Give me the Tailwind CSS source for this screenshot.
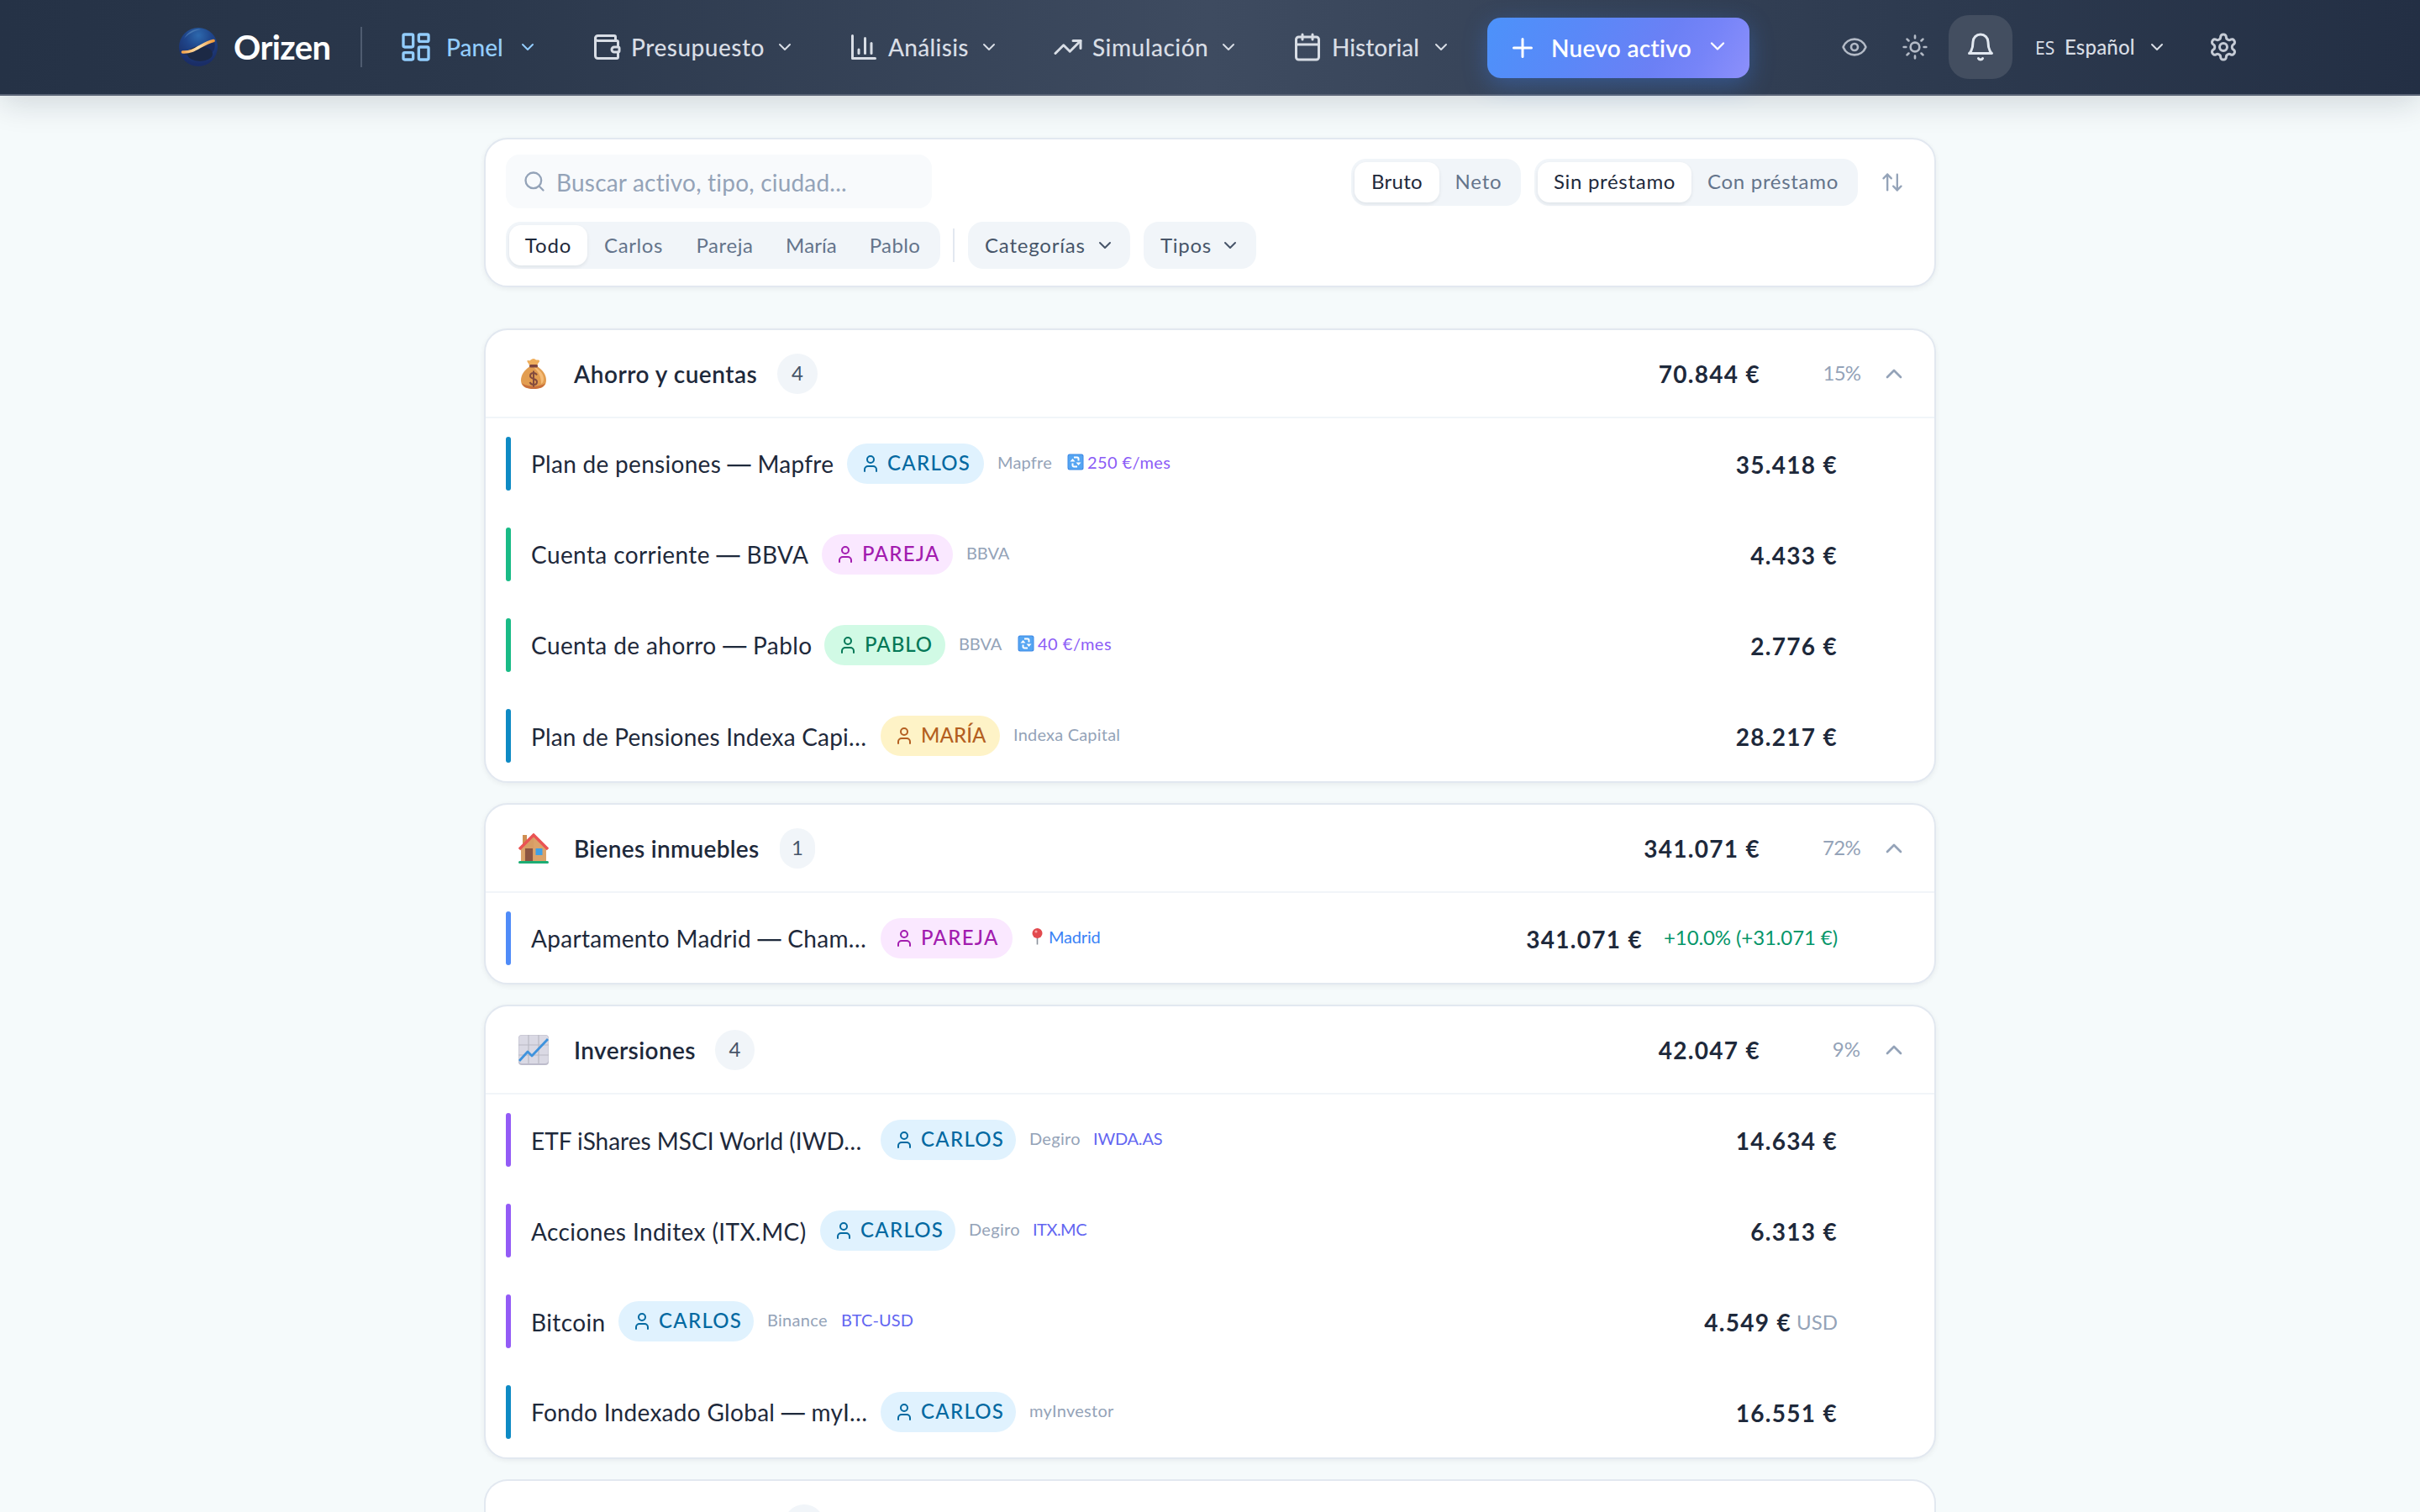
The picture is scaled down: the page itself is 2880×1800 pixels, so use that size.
<!DOCTYPE html>
<html lang="es">
<head>
    <meta charset="UTF-8">
    <meta name="viewport" content="width=device-width, initial-scale=1.0">
    <title>Orizen</title>
    <script src="https://cdn.jsdelivr.net/npm/@tailwindcss/browser@4"></script>
</head>
<body class="bg-[#f5fafb] font-[Lato,'Open_Sans',sans-serif] text-[#1e293b] h-[1800px] overflow-hidden">

    <!-- Icon sprite -->
    <svg class="hidden" xmlns="http://www.w3.org/2000/svg">
        <symbol id="down" viewBox="0 0 24 24"><path d="m6 9 6 6 6-6"/></symbol>
        <symbol id="up" viewBox="0 0 24 24"><path d="m18 15-6-6-6 6"/></symbol>
        <symbol id="user" viewBox="0 0 24 24"><path d="M19 21v-2a4 4 0 0 0-4-4H9a4 4 0 0 0-4 4v2"/><circle cx="12" cy="7" r="4"/></symbol>
        <symbol id="repeat" viewBox="0 0 20 20">
            <rect x="0.5" y="0.5" width="19" height="19" rx="2.5" fill="#3f8ae6" stroke="none"/>
            <rect x="1.5" y="1.5" width="17" height="17" rx="2" fill="#55a5f2" stroke="none"/>
            <path d="M6.500 11.500v2.500a1.500 1.500 0 0 0 1.500 1.500h4M13.500 8.500V6A1.500 1.500 0 0 0 12 4.500H8" fill="none" stroke="#fff" stroke-width="2"/>
            <path d="M3.500 9.500 6.500 6l3 3.500zM10.500 10.500l3 3.500 3-3.500z" fill="#fff" stroke="none"/>
        </symbol>
    </svg>

    <!-- Navbar -->
    <nav class="relative z-10 flex items-center h-[114px] pl-[212px] border-b-2 border-[#5a6476] bg-[linear-gradient(90deg,#253246_0%,#2b384c_20%,#3e4b60_50%,#2d3a4f_80%,#232f44_100%)] shadow-[0_8px_36px_rgba(15,23,42,0.16)] text-[28px] font-medium text-[#d8dde5]">
        <svg class="size-12 shrink-0" viewBox="0 0 48 48">
            <defs>
                <radialGradient id="globe" cx="0.5" cy="0.2" r="0.75">
                    <stop offset="0" stop-color="#2d69ae"/>
                    <stop offset="0.45" stop-color="#1f458a"/>
                    <stop offset="1" stop-color="#1a2d66"/>
                </radialGradient>
                <linearGradient id="swoosh" x1="0" x2="1">
                    <stop offset="0" stop-color="#f5a44a"/>
                    <stop offset="0.5" stop-color="#ffe2b0"/>
                    <stop offset="1" stop-color="#f09a3c"/>
                </linearGradient>
            </defs>
            <circle cx="24" cy="24" r="23" fill="url(#globe)"/>
            <path d="M7 14C12 5 20 2 27 3 18 5 11 9 7 14z" fill="#5b8cc0" opacity="0.6"/>
            <path d="M4 29C18 31 27 19 43 17c1 4 1 8-1 12-8 6-27 8-36 3z" fill="#1c2c5c"/>
            <ellipse cx="26" cy="32" rx="15" ry="9" fill="#1c2945"/>
            <path d="M5.500 30C20 31 27 20 42 16.500" fill="none" stroke="url(#swoosh)" stroke-width="3.600" stroke-linecap="round"/>
        </svg>
        <span class="ml-[18px] w-[116px] text-[40px] leading-none font-bold text-white tracking-[-0.6px]">Orizen</span>
        <div class="ml-[35px] w-[2px] h-12 bg-[#4f5c70]"></div>

        <div class="ml-11 flex items-center gap-16 whitespace-nowrap">
            <div class="flex items-center text-[#93cdfd]">
                <svg class="size-10" viewBox="0 0 24 24" fill="none" stroke="currentColor" stroke-width="2" stroke-linecap="round" stroke-linejoin="round"><rect width="7" height="9" x="3" y="3" rx="1"/><rect width="7" height="5" x="14" y="3" rx="1"/><rect width="7" height="9" x="14" y="12" rx="1"/><rect width="7" height="5" x="3" y="16" rx="1"/></svg>
                <span class="ml-[16px] w-[69px]">Panel</span>
                <svg class="ml-4 size-6" fill="none" stroke="currentColor" stroke-width="2" stroke-linecap="round" stroke-linejoin="round"><use href="#down"/></svg>
            </div>
            <div class="flex items-center">
                <svg class="size-9" viewBox="0 0 24 24" fill="none" stroke="currentColor" stroke-width="2" stroke-linecap="round" stroke-linejoin="round"><path d="M19 7V4a1 1 0 0 0-1-1H5a2 2 0 0 0 0 4h15a1 1 0 0 1 1 1v4h-3a2 2 0 0 0 0 4h3a1 1 0 0 0 1-1v-2a1 1 0 0 0-1-1"/><path d="M3 5v14a2 2 0 0 0 2 2h15a1 1 0 0 0 1-1v-4"/></svg>
                <span class="ml-[11px] w-[160px] tracking-[0.5px]">Presupuesto</span>
                <svg class="ml-[11px] size-6" fill="none" stroke="currentColor" stroke-width="2" stroke-linecap="round" stroke-linejoin="round"><use href="#down"/></svg>
            </div>
            <div class="flex items-center">
                <svg class="size-9" viewBox="0 0 24 24" fill="none" stroke="currentColor" stroke-width="2" stroke-linecap="round" stroke-linejoin="round"><path d="M3 3v18h18"/><path d="M18 17V9"/><path d="M13 17V5"/><path d="M8 17v-3"/></svg>
                <span class="ml-[11px] w-[97px] tracking-[0.3px]">Análisis</span>
                <svg class="ml-[11px] size-6" fill="none" stroke="currentColor" stroke-width="2" stroke-linecap="round" stroke-linejoin="round"><use href="#down"/></svg>
            </div>
            <div class="flex items-center">
                <svg class="size-9" viewBox="0 0 24 24" fill="none" stroke="currentColor" stroke-width="2" stroke-linecap="round" stroke-linejoin="round"><path d="m22 7-8.500 8.500-5-5L2 17"/><path d="M16 7h6v6"/></svg>
                <span class="ml-[11px] w-[140px] tracking-[0.5px]">Simulación</span>
                <svg class="ml-[10px] size-6" fill="none" stroke="currentColor" stroke-width="2" stroke-linecap="round" stroke-linejoin="round"><use href="#down"/></svg>
            </div>
            <div class="flex items-center">
                <svg class="size-9" viewBox="0 0 24 24" fill="none" stroke="currentColor" stroke-width="2" stroke-linecap="round" stroke-linejoin="round"><path d="M8 2v4"/><path d="M16 2v4"/><rect width="18" height="18" x="3" y="4" rx="2"/><path d="M3 10h18"/></svg>
                <span class="ml-[11px] w-[106px]">Historial</span>
                <svg class="ml-[12px] size-6" fill="none" stroke="currentColor" stroke-width="2" stroke-linecap="round" stroke-linejoin="round"><use href="#down"/></svg>
            </div>
        </div>

        <div class="ml-[43px] w-[312px] h-[72px] mt-px shrink-0 flex items-center pl-6 rounded-[16px] bg-[linear-gradient(120deg,#4c92fa_0%,#5a88f8_35%,#6b80f5_65%,#7684f8_80%,#8d90fb_100%)] shadow-[0_8px_28px_rgba(59,130,246,0.35)] font-semibold text-white whitespace-nowrap">
            <svg class="size-9" viewBox="0 0 24 24" fill="none" stroke="currentColor" stroke-width="2" stroke-linecap="round"><path d="M5 12h14M12 5v14"/></svg>
            <span class="ml-4 w-[170px] tracking-[0.3px]">Nuevo activo</span>
            <svg class="ml-[14px] mb-[3px] size-7" fill="none" stroke="currentColor" stroke-width="2" stroke-linecap="round" stroke-linejoin="round"><use href="#down"/></svg>
        </div>

        <svg class="ml-[109px] size-8 shrink-0 text-[#b3bac6]" viewBox="0 0 24 24" fill="none" stroke="currentColor" stroke-width="2" stroke-linecap="round" stroke-linejoin="round"><path d="M2.062 12.348a1 1 0 0 1 0-.696 10.750 10.750 0 0 1 19.876 0 1 1 0 0 1 0 .696 10.750 10.750 0 0 1-19.876 0"/><circle cx="12" cy="12" r="3"/></svg>
        <svg class="ml-10 size-8 shrink-0 text-[#b3bac6]" viewBox="0 0 24 24" fill="none" stroke="currentColor" stroke-width="2" stroke-linecap="round" stroke-linejoin="round"><circle cx="12" cy="12" r="4"/><path d="M12 2v2M12 20v2M4.930 4.930l1.410 1.410M17.660 17.660l1.410 1.410M2 12h2M20 12h2M6.340 17.660l-1.410 1.410M19.070 4.930l-1.410 1.410"/></svg>
        <div class="ml-6 size-[76px] shrink-0 rounded-[24px] bg-[#434e60] flex items-center justify-center text-[#e2e8f0]">
            <svg class="size-9" viewBox="0 0 24 24" fill="none" stroke="currentColor" stroke-width="2" stroke-linecap="round" stroke-linejoin="round"><path d="M6 8a6 6 0 0 1 12 0c0 7 3 9 3 9H3s3-2 3-9"/><path d="M10.300 21a1.940 1.940 0 0 0 3.400 0"/></svg>
        </div>
        <span class="ml-[27px] w-6 pt-[4px] text-[21px] font-normal font-['Noto_Sans',sans-serif]">ES</span>
        <span class="ml-[11px] w-[86px] text-[24px] pb-px tracking-[0.2px]">Español</span>
        <svg class="ml-[12px] size-6" fill="none" stroke="currentColor" stroke-width="2" stroke-linecap="round" stroke-linejoin="round"><use href="#down"/></svg>
        <svg class="ml-[49px] size-9 text-[#c5cbd5]" viewBox="0 0 24 24" fill="none" stroke="currentColor" stroke-width="2" stroke-linecap="round" stroke-linejoin="round"><path d="M12.220 2h-.44a2 2 0 0 0-2 2v.18a2 2 0 0 1-1 1.730l-.43.25a2 2 0 0 1-2 0l-.15-.08a2 2 0 0 0-2.730.73l-.22.38a2 2 0 0 0 .73 2.730l.15.1a2 2 0 0 1 1 1.720v.51a2 2 0 0 1-1 1.740l-.15.09a2 2 0 0 0-.73 2.730l.22.38a2 2 0 0 0 2.730.73l.15-.08a2 2 0 0 1 2 0l.43.25a2 2 0 0 1 1 1.730V20a2 2 0 0 0 2 2h.44a2 2 0 0 0 2-2v-.18a2 2 0 0 1 1-1.730l.43-.25a2 2 0 0 1 2 0l.15.08a2 2 0 0 0 2.730-.73l.22-.39a2 2 0 0 0-.73-2.730l-.15-.08a2 2 0 0 1-1-1.740v-.5a2 2 0 0 1 1-1.740l.15-.09a2 2 0 0 0 .73-2.730l-.22-.38a2 2 0 0 0-2.730-.73l-.15.08a2 2 0 0 1-2 0l-.43-.25a2 2 0 0 1-1-1.730V4a2 2 0 0 0-2-2z"/><circle cx="12" cy="12" r="3"/></svg>
    </nav>

    <main class="w-[1728px] mx-auto pt-[50px] whitespace-nowrap">
        <!-- Filters -->
        <section class="mb-[49px] px-6 pt-[18px] pb-5 bg-white border-2 border-[#e2e8f0] rounded-[28px] shadow-[0_2px_6px_rgba(15,23,42,0.06)] text-[24px] font-normal text-[#64748b]">
            <div class="flex items-center">
                <div class="w-[507px] h-16 flex items-center pl-5 rounded-[16px] bg-[#f8fafc] text-[28px] text-[#94a3b8]">
                    <svg class="size-7" viewBox="0 0 24 24" fill="none" stroke="currentColor" stroke-width="2" stroke-linecap="round"><circle cx="11" cy="11" r="8"/><path d="m21 21-4.300-4.300"/></svg>
                    <span class="ml-3 pt-px tracking-[0.2px]">Buscar activo, tipo, ciudad...</span>
                </div>
                <div class="ml-auto mt-px h-14 p-1 flex rounded-[18px] bg-[#f1f5f9]">
                    <div class="w-[101px] h-12 pb-[2px] flex items-center justify-center rounded-[14px] bg-white text-[#1e293b] tracking-[0.3px] shadow-[0_2px_4px_rgba(15,23,42,0.08)]">Bruto</div>
                    <div class="w-[93px] h-12 pb-[2px] flex items-center justify-center tracking-[0.8px]">Neto</div>
                </div>
                <div class="ml-4 mt-px h-14 p-1 flex rounded-[18px] bg-[#f1f5f9]">
                    <div class="w-[183px] h-12 pb-[2px] flex items-center justify-center rounded-[14px] bg-white text-[#1e293b] tracking-[0.7px] shadow-[0_2px_4px_rgba(15,23,42,0.08)]">Sin préstamo</div>
                    <div class="w-[194px] h-12 pb-[2px] flex items-center justify-center tracking-[0.7px]">Con préstamo</div>
                </div>
                <svg class="ml-[27px] mr-[12px] mt-[2px] size-7 text-[#94a3b8]" viewBox="0 0 24 24" fill="none" stroke="currentColor" stroke-width="2" stroke-linecap="round" stroke-linejoin="round"><path d="m21 16-4 4-4-4"/><path d="M17 20V4"/><path d="m3 8 4-4 4 4"/><path d="M7 4v16"/></svg>
            </div>
            <div class="mt-4 flex items-center h-14">
                <div class="h-14 p-1 flex rounded-[18px] bg-[#f1f5f9]">
                    <div class="w-[93px] h-12 flex items-center justify-center rounded-[14px] bg-white text-[#1e293b] tracking-[0.9px] shadow-[0_2px_4px_rgba(15,23,42,0.08)]">Todo</div>
                    <div class="w-[110px] h-12 flex items-center justify-center tracking-[0.6px]">Carlos</div>
                    <div class="w-[107px] h-12 flex items-center justify-center tracking-[0.6px]">Pareja</div>
                    <div class="w-[99px] h-12 flex items-center justify-center tracking-[0.1px]">María</div>
                    <div class="w-[100px] h-12 flex items-center justify-center tracking-[0.4px]">Pablo</div>
                </div>
                <div class="ml-[15px] w-[2px] h-10 bg-[#e2e8f0]"></div>
                <div class="ml-[16px] w-[193px] h-14 flex items-center pl-5 rounded-[18px] bg-[#f1f5f9] text-[#475569]">
                    <span class="w-[120px] tracking-[0.8px]">Categorías</span>
                    <svg class="ml-[11px] size-6" fill="none" stroke="currentColor" stroke-width="2" stroke-linecap="round" stroke-linejoin="round"><use href="#down"/></svg>
                </div>
                <div class="ml-4 w-[134px] h-14 flex items-center pl-5 rounded-[18px] bg-[#f1f5f9] text-[#475569]">
                    <span class="w-[60px] tracking-[0.7px]">Tipos</span>
                    <svg class="ml-[11px] size-6" fill="none" stroke="currentColor" stroke-width="2" stroke-linecap="round" stroke-linejoin="round"><use href="#down"/></svg>
                </div>
            </div>
        </section>

        <div class="flex flex-col gap-[24px] text-[28px]">

            <!-- Ahorro y cuentas -->
            <section class="h-[541px] bg-white border-2 border-[#e2e8f0] rounded-[28px] shadow-[0_2px_6px_rgba(15,23,42,0.06)]">
                <div class="h-[105px] flex items-center pl-[33px] pr-8 border-b-2 border-[#f1f5f9]">
                    <div class="w-12 flex justify-center">
                        <svg class="size-9" viewBox="0 0 36 36">
                            <path d="M13 8c-1-3-3-4-2.500-5.500S13 3 14 2s2-2 4-2 2 1.500 3.500 1.500S24.500 1 25 2.500 23 5 22.500 8z" fill="#efae5c"/>
                            <path d="M13 9.500h10C29 14 33 19 33 25.500S29 36 18 36 3 32 3 25.500 7 14 13 9.500z" fill="#e29d50"/>
                            <path d="M20 10c7 5 10 9 10 14 0 3-1 5-3 6 0-9-3-14-9-20z" fill="#f6bd78"/>
                            <path d="M4 29c6 5 22 5 28 0-2 5-7 7-14 7S6 34 4 29z" fill="#c86f3c"/>
                            <rect x="13" y="7" width="10" height="3.500" rx="1.500" fill="#7c4440"/>
                            <path d="M22 19.500c-1-2-2.500-2.500-4-2.500-2.500 0-4 1.500-4 3.500 0 4.500 8 2.500 8 7 0 2-1.500 3.500-4 3.500-2 0-3.500-1-4.500-3M18 14.500v19" fill="none" stroke="#834b3d" stroke-width="2"/>
                        </svg>
                    </div>
                    <span class="ml-6 w-[220px] font-semibold tracking-[0.5px]">Ahorro y cuentas</span>
                    <span class="ml-[22px] w-12 h-12 pb-[2px] flex items-center justify-center rounded-full bg-[#f1f5f9] text-[24px] text-[#475569]">4</span>
                    <span class="ml-auto font-bold tracking-[1.3px]">70.844 €</span>
                    <span class="w-[119px] pb-[2px] text-right text-[24px] text-[#94a3b8] tracking-[-0.9px]">15%</span>
                    <svg class="ml-6 size-8 text-[#94a3b8]" fill="none" stroke="currentColor" stroke-width="2" stroke-linecap="round" stroke-linejoin="round"><use href="#up"/></svg>
                </div>
                <div class="h-[108px] flex items-center pl-6 pr-[115px]">
                    <div class="w-[6px] h-16 rounded-full bg-[#0e8ac4]"></div>
                    <span class="ml-6 w-[360px] pt-px tracking-[0.3px]">Plan de pensiones <span class="font-[Inter]">—</span> Mapfre</span>
                    <span class="ml-4 w-[163px] h-12 pl-4 flex items-center rounded-full bg-[#e0f2fe] text-[24px] text-[#0369a1]">
                        <svg class="size-6 mr-2" fill="none" stroke="currentColor" stroke-width="2" stroke-linecap="round" stroke-linejoin="round"><use href="#user"/></svg><span class="pb-[3px] font-medium tracking-[1.3px]">CARLOS</span>
                    </span>
                    <span class="ml-4 w-[67px] pb-[5px] text-[20px] text-[#94a3b8] tracking-[0.2px]">Mapfre</span>
                    <svg class="ml-4 mb-1 size-5"><use href="#repeat"/></svg>
                    <span class="ml-1 pb-[5px] text-[20px] text-[#8b5cf6] tracking-[0.4px]">250 €/mes</span>
                    <span class="ml-auto pt-[2px] font-bold tracking-[1.3px]">35.418 €</span>
                </div>
                <div class="h-[108px] flex items-center pl-6 pr-[115px]">
                    <div class="w-[6px] h-16 rounded-full bg-[#19bb86]"></div>
                    <span class="ml-6 w-[330px] pt-px tracking-[0.4px]">Cuenta corriente <span class="font-[Inter]">—</span> BBVA</span>
                    <span class="ml-4 w-[156px] h-12 pl-4 flex items-center rounded-full bg-[#fae8ff] text-[24px] text-[#a21caf]">
                        <svg class="size-6 mr-2" fill="none" stroke="currentColor" stroke-width="2" stroke-linecap="round" stroke-linejoin="round"><use href="#user"/></svg><span class="pb-[3px] font-medium tracking-[1.3px]">PAREJA</span>
                    </span>
                    <span class="ml-4 pb-[5px] text-[20px] text-[#94a3b8] tracking-[-0.1px]">BBVA</span>
                    <span class="ml-auto pt-[2px] font-bold tracking-[1.3px]">4.433 €</span>
                </div>
                <div class="h-[108px] flex items-center pl-6 pr-[115px]">
                    <div class="w-[6px] h-16 rounded-full bg-[#19bb86]"></div>
                    <span class="ml-6 w-[333px] pt-px tracking-[0.4px]">Cuenta de ahorro <span class="font-[Inter]">—</span> Pablo</span>
                    <span class="ml-4 w-[144px] h-12 pl-4 flex items-center rounded-full bg-[#d1fae5] text-[24px] text-[#047857]">
                        <svg class="size-6 mr-2" fill="none" stroke="currentColor" stroke-width="2" stroke-linecap="round" stroke-linejoin="round"><use href="#user"/></svg><span class="pb-[3px] font-medium tracking-[1.0px]">PABLO</span>
                    </span>
                    <span class="ml-4 w-[54px] pb-[5px] text-[20px] text-[#94a3b8] tracking-[-0.1px]">BBVA</span>
                    <svg class="ml-4 mb-1 size-5"><use href="#repeat"/></svg>
                    <span class="ml-1 pb-[5px] text-[20px] text-[#8b5cf6] tracking-[0.5px]">40 €/mes</span>
                    <span class="ml-auto pt-[2px] font-bold tracking-[1.3px]">2.776 €</span>
                </div>
                <div class="h-[108px] flex items-center pl-6 pr-[115px]">
                    <div class="w-[6px] h-16 rounded-full bg-[#0e8ac4]"></div>
                    <span class="ml-6 w-[400px] pt-px tracking-[0.2px]">Plan de Pensiones Indexa Capi…</span>
                    <span class="ml-4 w-[142px] h-12 pl-4 flex items-center rounded-full bg-[#fef3c7] text-[24px] text-[#b45f21]">
                        <svg class="size-6 mr-2" fill="none" stroke="currentColor" stroke-width="2" stroke-linecap="round" stroke-linejoin="round"><use href="#user"/></svg><span class="pb-[3px] font-medium tracking-[0.1px]">MARÍA</span>
                    </span>
                    <span class="ml-4 pb-[5px] text-[20px] text-[#94a3b8] tracking-[0.2px]">Indexa Capital</span>
                    <span class="ml-auto pt-[2px] font-bold tracking-[1.3px]">28.217 €</span>
                </div>
            </section>

            <!-- Bienes inmuebles -->
            <section class="h-[216px] bg-white border-2 border-[#e2e8f0] rounded-[28px] shadow-[0_2px_6px_rgba(15,23,42,0.06)]">
                <div class="h-[105px] flex items-center pl-[33px] pr-8 border-b-2 border-[#f1f5f9]">
                    <div class="w-12 flex justify-center">
                        <svg class="size-9" viewBox="0 0 36 36">
                            <rect x="5" y="2" width="5" height="12" fill="#cf8f52"/>
                            <path d="M18 3 3 18v16h30V18z" fill="#dba36a"/>
                            <path d="M18 3v31H7V14z" fill="#d39a60" opacity="0.6"/>
                            <rect x="8" y="18" width="9" height="15" fill="#8d5542"/>
                            <rect x="20.500" y="18" width="8" height="8" fill="#3fa0e6"/>
                            <path d="M1 19 18 2l17 17" fill="none" stroke="#ea5353" stroke-width="3.400"/>
                            <rect x="0" y="33" width="36" height="3" rx="1.500" fill="#1cad74"/>
                        </svg>
                    </div>
                    <span class="ml-6 w-[223px] font-semibold tracking-[0.3px]">Bienes inmuebles</span>
                    <span class="ml-[22px] w-[42px] h-12 pb-[2px] flex items-center justify-center rounded-full bg-[#f1f5f9] text-[24px] text-[#475569]">1</span>
                    <span class="ml-auto font-bold tracking-[1.3px]">341.071 €</span>
                    <span class="w-[119px] pb-[2px] text-right text-[24px] text-[#94a3b8] tracking-[-0.7px]">72%</span>
                    <svg class="ml-6 size-8 text-[#94a3b8]" fill="none" stroke="currentColor" stroke-width="2" stroke-linecap="round" stroke-linejoin="round"><use href="#up"/></svg>
                </div>
                <div class="h-[108px] flex items-center pl-6 pr-[115px]">
                    <div class="w-[6px] h-16 rounded-full bg-[#4f8bf8]"></div>
                    <span class="ml-6 w-[400px] pt-px tracking-[0.3px]">Apartamento Madrid <span class="font-[Inter]">—</span> Cham…</span>
                    <span class="ml-4 w-[157px] h-12 pl-4 flex items-center rounded-full bg-[#fae8ff] text-[24px] text-[#a21caf]">
                        <svg class="size-6 mr-2" fill="none" stroke="currentColor" stroke-width="2" stroke-linecap="round" stroke-linejoin="round"><use href="#user"/></svg><span class="pb-[3px] font-medium tracking-[1.3px]">PAREJA</span>
                    </span>
                    <svg class="ml-5 mb-1 size-5" viewBox="0 0 20 20"><path d="M9.500 9v10.500" stroke="#8b929c" stroke-width="1.600"/><circle cx="9.500" cy="6" r="6" fill="#e24a4f"/><circle cx="8" cy="4" r="1.600" fill="#f6a3a3"/></svg>
                    <span class="ml-[3px] pb-[5px] text-[20px] text-[#3b82f6] tracking-[-0.2px]">Madrid</span>
                    <span class="ml-auto pt-[2px] font-bold tracking-[1.3px]">341.071 €</span>
                    <span class="ml-[25px] pb-[3px] text-[24px] text-[#059669] tracking-[-0.1px]">+10.0% (+31.071 €)</span>
                </div>
            </section>

            <!-- Inversiones -->
            <section class="h-[541px] bg-white border-2 border-[#e2e8f0] rounded-[28px] shadow-[0_2px_6px_rgba(15,23,42,0.06)]">
                <div class="h-[105px] flex items-center pl-[33px] pr-8 border-b-2 border-[#f1f5f9]">
                    <div class="w-12 flex justify-center">
                        <svg class="size-9" viewBox="0 0 36 36">
                            <rect x="0" y="0" width="36" height="36" rx="4" fill="#bdbccb"/>
                            <rect x="0.500" y="0.500" width="35" height="33.500" rx="4" fill="#dad9e4"/>
                            <path d="M12 0v34M24 0v34M0 12h36M0 24h36" stroke="#b9b9c4" stroke-width="1.200"/>
                            <path d="m1 31 10-11 5 5L35 5" fill="none" stroke="#3f93dd" stroke-width="2.800" stroke-linejoin="round"/>
                        </svg>
                    </div>
                    <span class="ml-6 w-[146px] font-semibold tracking-[0.4px]">Inversiones</span>
                    <span class="ml-[22px] w-[47px] h-12 pb-[2px] flex items-center justify-center rounded-full bg-[#f1f5f9] text-[24px] text-[#475569]">4</span>
                    <span class="ml-auto font-bold tracking-[1.3px]">42.047 €</span>
                    <span class="w-[119px] pb-[2px] text-right text-[24px] text-[#94a3b8]">9%</span>
                    <svg class="ml-6 size-8 text-[#94a3b8]" fill="none" stroke="currentColor" stroke-width="2" stroke-linecap="round" stroke-linejoin="round"><use href="#up"/></svg>
                </div>
                <div class="h-[108px] flex items-center pl-6 pr-[115px]">
                    <div class="w-[6px] h-16 rounded-full bg-[#935bf6]"></div>
                    <span class="ml-6 w-[400px] pt-px">ETF iShares MSCI World (IWD…</span>
                    <span class="ml-4 w-[161px] h-12 pl-4 flex items-center rounded-full bg-[#e0f2fe] text-[24px] text-[#0369a1]">
                        <svg class="size-6 mr-2" fill="none" stroke="currentColor" stroke-width="2" stroke-linecap="round" stroke-linejoin="round"><use href="#user"/></svg><span class="pb-[3px] font-medium tracking-[1.3px]">CARLOS</span>
                    </span>
                    <span class="ml-4 w-[60px] pb-[5px] text-[20px] text-[#94a3b8] tracking-[0.3px]">Degiro</span>
                    <span class="ml-4 pb-[5px] text-[20px] text-[#6366f1] tracking-[-0.2px]">IWDA.AS</span>
                    <span class="ml-auto pt-[2px] font-bold tracking-[1.3px]">14.634 €</span>
                </div>
                <div class="h-[108px] flex items-center pl-6 pr-[115px]">
                    <div class="w-[6px] h-16 rounded-full bg-[#935bf6]"></div>
                    <span class="ml-6 w-[328px] pt-px tracking-[0.4px]">Acciones Inditex (ITX.MC)</span>
                    <span class="ml-4 w-[161px] h-12 pl-4 flex items-center rounded-full bg-[#e0f2fe] text-[24px] text-[#0369a1]">
                        <svg class="size-6 mr-2" fill="none" stroke="currentColor" stroke-width="2" stroke-linecap="round" stroke-linejoin="round"><use href="#user"/></svg><span class="pb-[3px] font-medium tracking-[1.3px]">CARLOS</span>
                    </span>
                    <span class="ml-4 w-[60px] pb-[5px] text-[20px] text-[#94a3b8] tracking-[0.3px]">Degiro</span>
                    <span class="ml-4 pb-[5px] text-[20px] text-[#6366f1] tracking-[-0.5px]">ITX.MC</span>
                    <span class="ml-auto pt-[2px] font-bold tracking-[1.3px]">6.313 €</span>
                </div>
                <div class="h-[108px] flex items-center pl-6 pr-[115px]">
                    <div class="w-[6px] h-16 rounded-full bg-[#935bf6]"></div>
                    <span class="ml-6 w-[88px] pt-px tracking-[0.4px]">Bitcoin</span>
                    <span class="ml-4 w-[161px] h-12 pl-4 flex items-center rounded-full bg-[#e0f2fe] text-[24px] text-[#0369a1]">
                        <svg class="size-6 mr-2" fill="none" stroke="currentColor" stroke-width="2" stroke-linecap="round" stroke-linejoin="round"><use href="#user"/></svg><span class="pb-[3px] font-medium tracking-[1.3px]">CARLOS</span>
                    </span>
                    <span class="ml-4 w-[72px] pb-[5px] text-[20px] text-[#94a3b8] tracking-[0.3px]">Binance</span>
                    <span class="ml-4 pb-[5px] text-[20px] text-[#6366f1] tracking-[0.1px]">BTC-USD</span>
                    <span class="ml-auto pt-[2px] font-bold tracking-[1.3px]">4.549 €</span>
                    <span class="ml-[6px] pt-px text-[24px] text-[#94a3b8]">USD</span>
                </div>
                <div class="h-[108px] flex items-center pl-6 pr-[115px]">
                    <div class="w-[6px] h-16 rounded-full bg-[#0e8ac4]"></div>
                    <span class="ml-6 w-[400px] pt-px tracking-[0.3px]">Fondo Indexado Global <span class="font-[Inter]">—</span> myI…</span>
                    <span class="ml-4 w-[161px] h-12 pl-4 flex items-center rounded-full bg-[#e0f2fe] text-[24px] text-[#0369a1]">
                        <svg class="size-6 mr-2" fill="none" stroke="currentColor" stroke-width="2" stroke-linecap="round" stroke-linejoin="round"><use href="#user"/></svg><span class="pb-[3px] font-medium tracking-[1.3px]">CARLOS</span>
                    </span>
                    <span class="ml-4 pb-[5px] text-[20px] text-[#94a3b8] tracking-[0.3px]">myInvestor</span>
                    <span class="ml-auto pt-[2px] font-bold tracking-[1.3px]">16.551 €</span>
                </div>
            </section>

            <!-- Next group, below the fold -->
            <section class="h-[40px] bg-white border-2 border-b-0 border-[#e2e8f0] rounded-t-[28px] pl-[355px] pt-[28px] overflow-hidden">
                <div class="size-12 rounded-full bg-[#f1f5f9]"></div>
            </section>
        </div>
    </main>
</body>
</html>
